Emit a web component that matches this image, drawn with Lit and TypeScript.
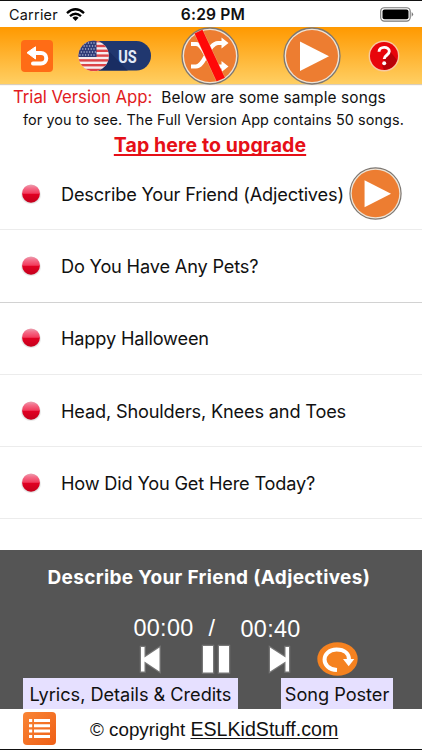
import { LitElement, html, css, svg } from "lit";
import { customElement, property } from "lit/decorators.js";

@customElement("play-disc")
class PlayDisc extends LitElement {
  static styles = css`
    :host { display: block; }
    svg { display: block; width: 100%; height: 100%; }
  `;
  render() {
    return html`<svg viewBox="0 0 58 58">
      <circle cx="29" cy="29" r="28" fill="#eee3d5" stroke="#7d7772" stroke-width="1.3" />
      <circle cx="29" cy="29" r="26" fill="#ed7d31" />
      <path d="M17 14.5V44L46 29.3Z" fill="#fff" />
    </svg>`;
  }
}

@customElement("song-row")
class SongRow extends LitElement {
  @property() name = "";
  @property({ type: Boolean }) current = false;
  static styles = css`
    :host { display: flex; align-items: center; box-sizing: border-box; height: 72.3px; padding-left: 20px; border-bottom: 1px solid #ececec; }
    :host(.dark) { border-bottom-color: #d2d2d2; }
    .ball { width: 22px; height: 22px; flex: none; }
    .name { margin-left: 19px; font-size: 18.2px; letter-spacing: -.18px; white-space: nowrap; flex: none; width: 288px; color: #111; }
    .play { width: 53px; height: 53px; flex: none; }
  `;
  render() {
    return html`
      <svg class="ball" viewBox="0 0 22 22">
        <defs>
          <linearGradient id="b" x1="0" y1="0" x2="0" y2="1">
            <stop offset="0" stop-color="#e9a3b2" /><stop offset=".2" stop-color="#f46c88" />
            <stop offset=".48" stop-color="#f23b5c" /><stop offset=".54" stop-color="#e00022" />
            <stop offset="1" stop-color="#c4001c" />
          </linearGradient>
          <radialGradient id="s"><stop offset=".7" stop-color="#999" stop-opacity=".55" /><stop offset="1" stop-color="#999" stop-opacity="0" /></radialGradient>
        </defs>
        <ellipse cx="11" cy="12" rx="10.5" ry="9.6" fill="url(#s)" />
        <ellipse cx="11" cy="10.6" rx="8.9" ry="9.2" fill="url(#b)" />
      </svg>
      <span class="name">${this.name}</span>
      ${this.current ? html`<play-disc class="play"></play-disc>` : ""}
    `;
  }
}

@customElement("app-root")
class AppRoot extends LitElement {
  static styles = css`
    :host { display: flex; flex-direction: column; box-sizing: border-box; width: 422px; height: 750px; overflow: hidden; background: #fff; border-top: 1px solid #111; border-bottom: 1px solid #111; font-family: Inter, "Liberation Sans", sans-serif; color: #111; }
    svg { display: block; flex: none; }
    .status { display: grid; grid-template-columns: 1fr auto 1fr; align-items: center; height: 26px; padding: 1px 8px 0 9px; box-sizing: border-box; flex: none; }
    .carrier { display: flex; align-items: center; gap: 8px; font-size: 14.4px; letter-spacing: .25px; }
    .clock { font-size: 15.6px; font-weight: 600; letter-spacing: .2px; margin-left: 3px; }
    .battery { justify-self: end; }
    .bar { display: flex; align-items: center; height: 57px; flex: none; background: linear-gradient(#ff9900, #ffcf63); padding-left: 21px; box-shadow: 0 1px 1px #d9cdbb; }
    .back { width: 32px; height: 32px; }
    .flag { width: 74px; height: 32px; margin-left: 25px; }
    .shuffle { width: 58px; height: 58px; margin-left: 28.5px; }
    .play { width: 58px; height: 58px; margin-left: 44.5px; flex: none; }
    .help { width: 32px; height: 32px; margin-left: 27px; }
    .notice { height: 74px; flex: none; display: flex; flex-direction: column; white-space: nowrap; }
    .line1 { display: flex; align-items: baseline; gap: 9px; padding-left: 13px; height: 24px; line-height: 27px; }
    .trial { color: #e11b22; font-size: 16.8px; letter-spacing: -.05px; }
    .below { font-size: 15.4px; letter-spacing: .13px; }
    .line2 { padding-left: 23px; font-size: 14.4px; letter-spacing: .1px; line-height: 23px; height: 22px; }
    .upgrade { align-self: center; font-size: 19.5px; letter-spacing: .1px; line-height: 31px; font-weight: 700; color: #e60f17; text-decoration: underline; text-underline-offset: 2px; text-decoration-thickness: 1.6px; text-decoration-skip-ink: none; margin-right: 2px; }
    .list { display: flex; flex-direction: column; flex: 1; min-height: 0; }
    .player { height: 159px; flex: none; background: #555; color: #fff; display: flex; flex-direction: column; }
    .title { padding: 16px 0 0 47.5px; font-size: 19px; letter-spacing: .34px; line-height: 24px; height: 53px; font-weight: 650; white-space: nowrap; box-sizing: border-box; }
    .times { display: flex; height: 39px; padding: 12px 0 0 133.5px; font-family: "Liberation Sans", sans-serif; font-size: 23.4px; letter-spacing: .3px; line-height: 27px; box-sizing: border-box; }
    .slash { width: 32px; margin-left: 15px; }
    .total { padding-top: 1px; }
    .controls { display: flex; align-items: center; height: 33px; margin-bottom: 3px; padding-left: 137px; }
    .step { width: 28px; height: 32px; }
    .pause { width: 34px; height: 34px; margin-left: 34px; }
    .next { width: 28px; height: 32px; margin-left: 32px; }
    .loop { width: 41px; height: 34px; margin-left: 23.5px; }
    .links { display: flex; justify-content: space-between; padding: 0 29px 0 23px; height: 31px; }
    .link { background: #e6e0ff; color: #111; font-size: 18.2px; letter-spacing: -.04px; line-height: 33px; text-align: center; white-space: nowrap; }
    .lyrics { width: 215px; }
    .poster { width: 112px; }
    .footer { display: flex; align-items: center; height: 40px; flex: none; padding-left: 23px; font-family: "Liberation Sans", sans-serif; font-size: 18.8px; white-space: nowrap; box-sizing: border-box; padding-bottom: 1px; }
    .menu { width: 33px; height: 33px; }
    .copy { margin: 1px 0 0 34px; }
    .site { font-size: 19.6px; text-decoration: underline; text-underline-offset: 2px; text-decoration-thickness: 1.4px; }
  `;

  songs = [
    "Describe Your Friend (Adjectives)",
    "Do You Have Any Pets?",
    "Happy Halloween",
    "Head, Shoulders, Knees and Toes",
    "How Did You Get Here Today?",
  ];

  render() {
    const stars: unknown[] = [];
    for (let r = 0; r < 5; r++) for (let c = 0; c < 6; c++)
      stars.push(svg`<circle cx=${2 + c * 2.8 + (r % 2) * 1.3} cy=${3 + r * 3} r=".65" fill="#c5cbe3" />`);
    return html`
      <div class="status">
        <div class="carrier"><span>Carrier</span>
          <svg width="19" height="13" viewBox="0 0 19 13" fill="none" stroke="#000" stroke-width="2.4">
            <path d="M1 5.1Q9.5-2.4 18 5.1M4 8.2Q9.5 3.4 15 8.2" /><path d="M9.5 13L6.4 9.8Q9.5 7.3 12.6 9.8Z" fill="#000" stroke="none" />
          </svg>
        </div>
        <span class="clock">6:29 PM</span>
        <svg class="battery" width="34" height="15" viewBox="0 0 34 15">
          <rect x=".7" y=".7" width="29.5" height="13.4" rx="3.6" fill="#fff" stroke="#777" stroke-width="1.1" />
          <rect x="2.5" y="2.5" width="26" height="9.8" rx="2" /><path d="M31.7 5Q34.5 7.3 31.7 9.7Z" fill="#777" />
        </svg>
      </div>
      <div class="bar">
        <svg class="back" viewBox="0 0 32 32">
          <rect width="32" height="32" rx="4" fill="#ff6c16" />
          <path d="M12 13H20A5 5 0 0 1 20 23.5H12" fill="none" stroke="#fff" stroke-width="4" stroke-linecap="round" />
          <path d="M6 12.7L14.5 6.8V19Z" fill="#fff" stroke="#fff" stroke-linejoin="round" />
        </svg>
        <svg class="flag" viewBox="0 0 74 32">
          <defs>
            <clipPath id="fc"><circle cx="15.7" cy="16" r="15.2" /></clipPath>
            <clipPath id="pc"><rect x="1" y="1" width="72" height="29.5" rx="14.7" /></clipPath>
          </defs>
          <g clip-path="url(#pc)"><rect width="74" height="32" fill="#20376f" /><path d="M26 6L50 31H20Z" fill="#192d62" /></g>
          <g clip-path="url(#fc)">
            <rect width="32" height="32" fill="#f5edf0" />
            ${[0, 1, 2, 3, 4, 5, 6].map(i => svg`<rect y=${i * 4.8} width="32" height="2.4" fill="#dc4448" />`)}
            <rect width="18.5" height="17" fill="#303c78" />${stars}
          </g>
          <text x="40.2" y="22.7" font-family="Roboto, sans-serif" font-weight="700" font-size="17.5" textLength="18.5" lengthAdjust="spacingAndGlyphs" fill="#e3eaf7">US</text>
        </svg>
        <svg class="shuffle" viewBox="0 0 58 58">
          <circle cx="29" cy="29" r="28" fill="#eee3d5" stroke="#7d7772" stroke-width="1.3" />
          <circle cx="29" cy="29" r="26" fill="#ed7d31" />
          <path d="M10 17H15C24 17 26 39.5 36 39.5H43M10 39.5H15C24 39.5 27 16 37 16H43" fill="none" stroke="#fff" stroke-width="4.2" />
          <path d="M40.5 10.5L47.5 16 40.5 21.5ZM40.5 34L47.5 39.5 40.5 45Z" fill="#fff" />
          <path d="M13.6 6.6L21.4 2.8 43.8 50.8 35.6 54.3Z" fill="#ff0808" stroke="#f4ac82" stroke-width=".7" paint-order="stroke" />
        </svg>
        <play-disc class="play"></play-disc>
        <svg class="help" viewBox="0 0 32 32">
          <circle cx="16" cy="16" r="15.4" fill="#f8c9a0" /><circle cx="16" cy="16" r="14" fill="#e8050b" />
          <path d="M21 10L29 20Q26 29 16 30L14 25Z" fill="#b80209" />
          <path d="M11 11.8C11 6 21.3 6 21.3 11.3C21.3 15.3 16.2 15.2 16.2 19" fill="none" stroke="#fff" stroke-width="2.9" />
          <circle cx="16.2" cy="23.3" r="2" fill="#fff" />
        </svg>
      </div>
      <div class="notice">
        <div class="line1"><span class="trial">Trial Version App:</span><span class="below">Below are some sample songs</span></div>
        <div class="line2">for you to see. The Full Version App contains 50 songs.</div>
        <div class="upgrade">Tap here to upgrade</div>
      </div>
      <div class="list">
        ${this.songs.map((s, i) => html`<song-row class=${i === 1 ? "dark" : ""} .name=${s} ?current=${i === 0}></song-row>`)}
      </div>
      <div class="player">
        <div class="title">Describe Your Friend (Adjectives)</div>
        <div class="times"><span>00:00</span><span class="slash">/</span><span class="total">00:40</span></div>
        <div class="controls">
          <svg class="step" viewBox="0 0 28 32"><path d="M4 4H7.5V14.5L22.5 4.5V28.5L7.5 18.5V28.5H4Z" fill="#fff" stroke="#777" stroke-width="2.5" paint-order="stroke" /></svg>
          <svg class="pause" viewBox="0 0 34 34"><path d="M4 4H14V30.5H4ZM20 4H30V30.5H20Z" fill="#fff" stroke="#777" stroke-width="2.5" paint-order="stroke" /></svg>
          <svg class="next" viewBox="0 0 28 32"><path d="M24 4H20.5V14.5L5 4.5V28.5L20.5 18.5V28.5H24Z" fill="#fff" stroke="#777" stroke-width="2.5" paint-order="stroke" /></svg>
          <svg class="loop" viewBox="0 0 41 34">
            <ellipse cx="20.5" cy="17" rx="20.2" ry="16.8" fill="#f58220" />
            <path d="M20 28C3 27.2 4 7.6 19.5 7.6C28 7.6 32 12.2 32 17.5" fill="none" stroke="#fff" stroke-width="4" />
            <path d="M26 17H37.3L31.7 24.3Z" fill="#fff" />
          </svg>
        </div>
        <div class="links"><span class="link lyrics">Lyrics, Details &amp; Credits</span><span class="link poster">Song Poster</span></div>
      </div>
      <div class="footer">
        <svg class="menu" viewBox="0 0 33 33">
          <defs><linearGradient id="m" x1="0" y1="0" x2="1" y2="1"><stop stop-color="#f98535" /><stop offset="1" stop-color="#ef5f16" /></linearGradient></defs>
          <rect width="33" height="33" rx="4" fill="url(#m)" />
          <path d="M6 8.5h3.2M6 13.8h3.2M6 19.1h3.2M6 24.4h3.2M11 8.5h16M11 13.8h16M11 19.1h16M11 24.4h16" stroke="#fff" stroke-width="3" />
        </svg>
        <span class="copy">© copyright <span class="site">ESLKidStuff.com</span></span>
      </div>
    `;
  }
}
